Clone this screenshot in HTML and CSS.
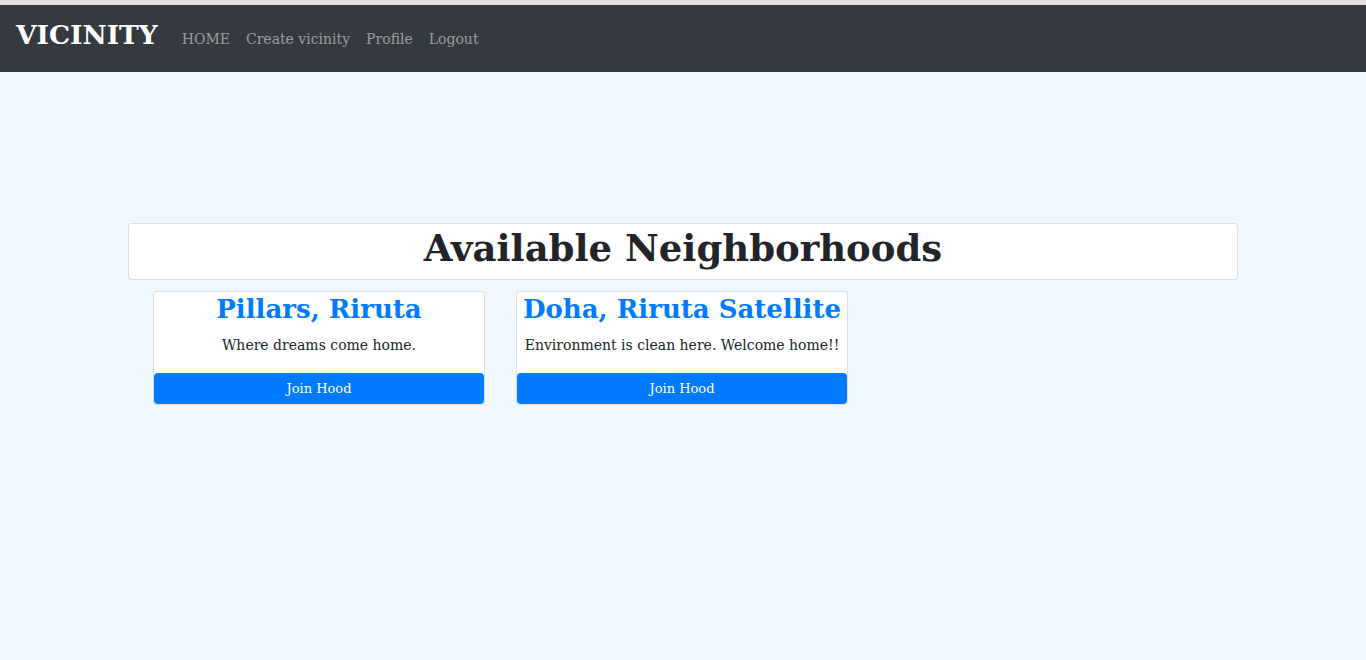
FILE: index.html
```html
<!DOCTYPE html>
<html>
<head>
<meta charset="utf-8">
<link rel="stylesheet" href="styles.css">
</head>
<body>
<div class="topline"></div>
<nav class="navbar">
  <a class="brand" href="#">VICINITY</a>
  <ul class="nav-links">
    <li><a href="#">HOME</a></li>
    <li><a href="#">Create vicinity</a></li>
    <li><a href="#">Profile</a></li>
    <li><a href="#">Logout</a></li>
  </ul>
</nav>
<main class="container">
  <div class="title-box">
    <h1>Available Neighborhoods</h1>
  </div>
  <div class="cards">
    <div class="card">
      <h2 class="card-title">Pillars, Riruta</h2>
      <p class="card-text">Where dreams come home.</p>
      <button class="btn">Join Hood</button>
    </div>
    <div class="card">
      <h2 class="card-title">Doha, Riruta Satellite</h2>
      <p class="card-text">Environment is clean here. Welcome home!!</p>
      <button class="btn">Join Hood</button>
    </div>
  </div>
</main>
</body>
</html>
```
FILE: styles.css
```css
* { box-sizing: border-box; }
html, body { margin: 0; padding: 0; }
body {
  background: #f0f8ff;
  font-family: "DejaVu Serif", Georgia, serif;
  color: #212529;
  min-height: 660px;
}
.topline { height: 5px; background: #e0e0e0; }
.navbar {
  height: 67px;
  background: #343a40;
  display: flex;
  align-items: center;
  padding: 0 16px;
}
.brand {
  color: #fff;
  text-decoration: none;
  font-weight: bold;
  font-size: 26.5px;
  margin-right: 16px;
  margin-top: -8px;
}
.nav-links {
  display: flex;
  list-style: none;
  margin: 0;
  padding: 0;
}
.nav-links a {
  display: block;
  padding: 8px 8px;
  color: rgba(255,255,255,0.5);
  text-decoration: none;
  font-size: 14px;
}
.container {
  width: 1110px;
  margin: 151px auto 0;
}
.title-box {
  background: #fff;
  border: 1px solid rgba(0,0,0,0.125);
  border-radius: 4px;
  height: 57px;
  display: flex;
  align-items: center;
  justify-content: center;
  padding-bottom: 6px;
}
h1 {
  margin: 0;
  font-size: 37px;
  font-weight: bold;
  line-height: 1.2;
}
.cards {
  display: flex;
  align-items: flex-start;
  gap: 31px;
  padding-left: 25px;
  margin-top: 11px;
}
.card {
  width: 332px;
  background: #fff;
  border: 1px solid rgba(0,0,0,0.125);
  border-radius: 4px;
  display: flex;
  flex-direction: column;
  text-align: center;
}
.card-title {
  margin: 0;
  color: #007bff;
  font-size: 26px;
  font-weight: bold;
  line-height: 34px;
}
.card-text {
  margin: 7px 0 16px;
  font-size: 14px;
  line-height: 24px;
}
.btn {
  background: #007bff;
  border: none;
  border-radius: 4px;
  color: #fff;
  font-family: inherit;
  font-size: 13px;
  height: 31px;
  width: 100%;
}
```
